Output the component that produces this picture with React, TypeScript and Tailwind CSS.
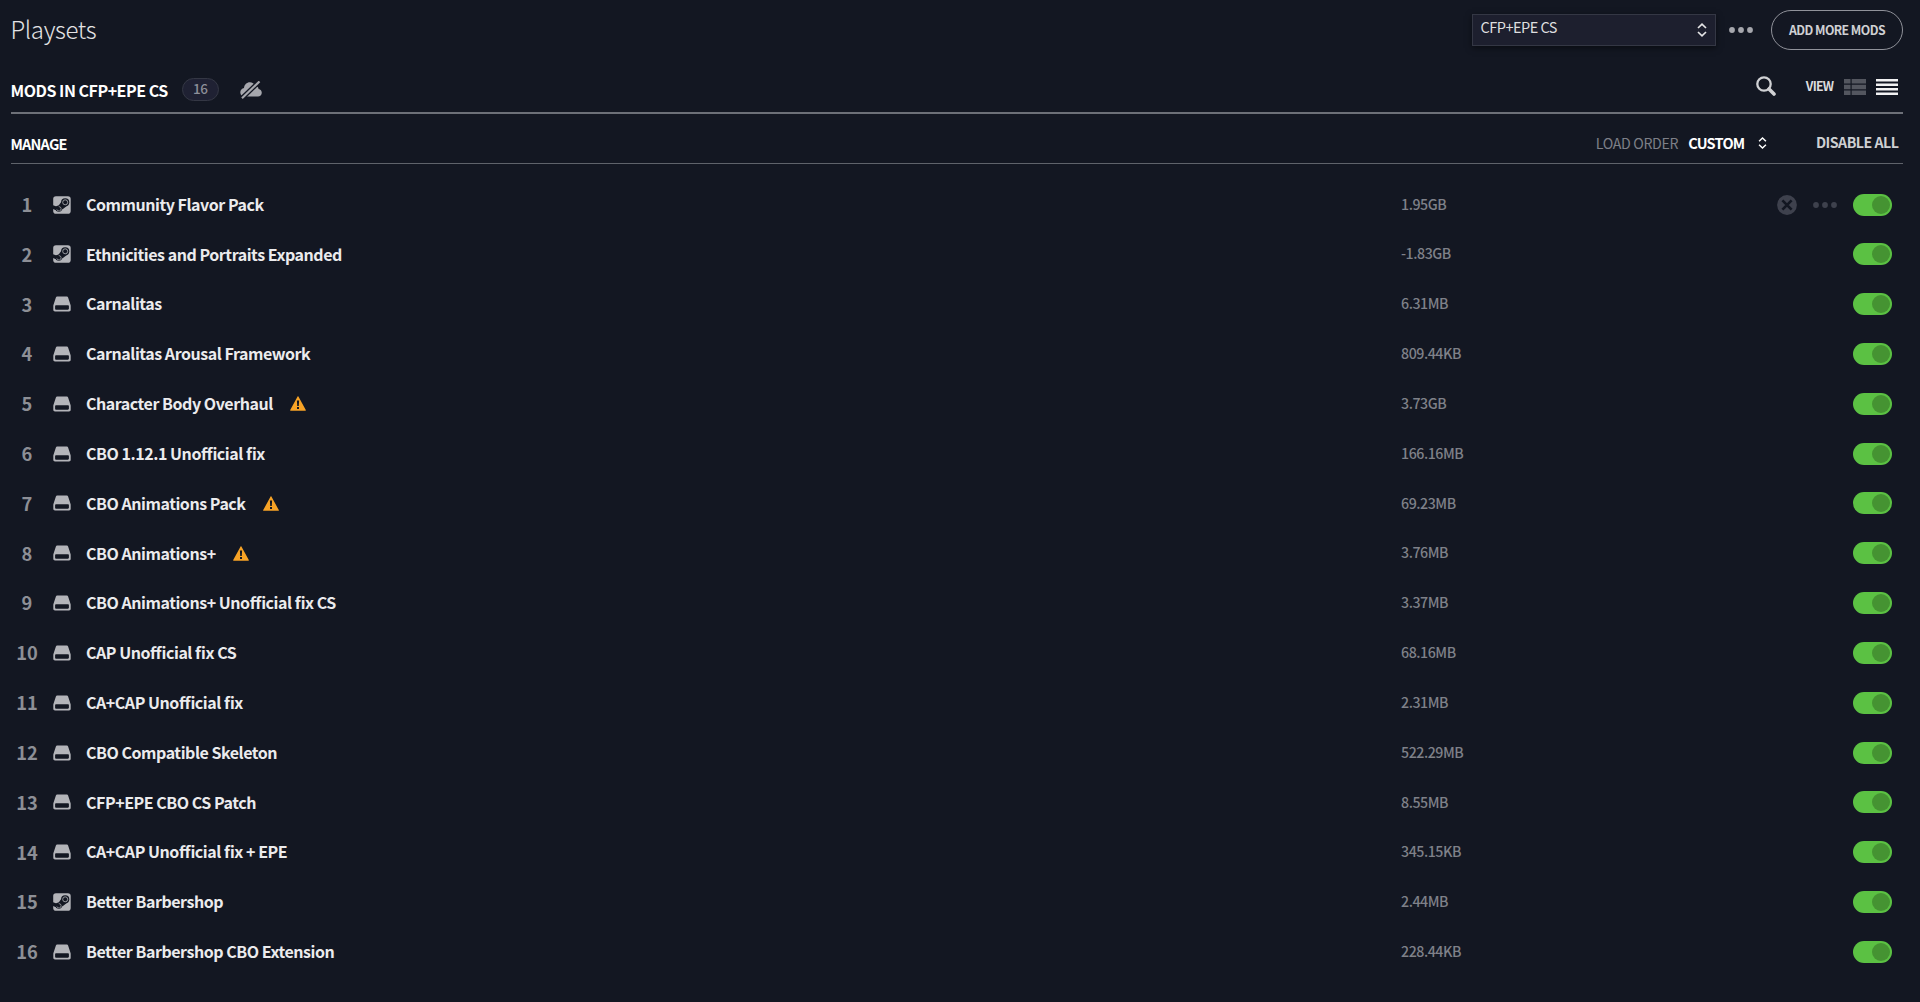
type Source = "steam" | "local";
type Mod = { name: string; size: string; source: Source; warning?: boolean };

const mods: Mod[] = [
  { name: "Community Flavor Pack", size: "1.95GB", source: "steam" },
  { name: "Ethnicities and Portraits Expanded", size: "-1.83GB", source: "steam" },
  { name: "Carnalitas", size: "6.31MB", source: "local" },
  { name: "Carnalitas Arousal Framework", size: "809.44KB", source: "local" },
  { name: "Character Body Overhaul", size: "3.73GB", source: "local", warning: true },
  { name: "CBO 1.12.1 Unofficial fix", size: "166.16MB", source: "local" },
  { name: "CBO Animations Pack", size: "69.23MB", source: "local", warning: true },
  { name: "CBO Animations+", size: "3.76MB", source: "local", warning: true },
  { name: "CBO Animations+ Unofficial fix CS", size: "3.37MB", source: "local" },
  { name: "CAP Unofficial fix CS", size: "68.16MB", source: "local" },
  { name: "CA+CAP Unofficial fix", size: "2.31MB", source: "local" },
  { name: "CBO Compatible Skeleton", size: "522.29MB", source: "local" },
  { name: "CFP+EPE CBO CS Patch", size: "8.55MB", source: "local" },
  { name: "CA+CAP Unofficial fix + EPE", size: "345.15KB", source: "local" },
  { name: "Better Barbershop", size: "2.44MB", source: "steam" },
  { name: "Better Barbershop CBO Extension", size: "228.44KB", source: "local" },
];

function Sorter({ className }: { className: string }) {
  return (
    <svg viewBox="0 0 10 14" className={className} fill="none" stroke="currentColor" strokeWidth="1.7">
      <path d="M1 5 5 1.200 9 5M1 9l4 3.800L9 9" />
    </svg>
  );
}

function Dots({ className }: { className: string }) {
  return (
    <svg viewBox="0 0 24 6" className={className} fill="currentColor">
      <circle cx="3" cy="3" r="2.900" />
      <circle cx="12" cy="3" r="2.900" />
      <circle cx="21" cy="3" r="2.900" />
    </svg>
  );
}

function CloudOff() {
  return (
    <svg viewBox="0 0 22 18" className="mt-[6px] ml-[21px] h-[18px] w-[22px] shrink-0 text-[#a6a7ad]">
      <path
        fill="currentColor"
        d="M4.500 15.500A4.400 4.400 0 0 1 .3 11.200C.3 9 2 7.300 4 6.900 4.400 3.600 6.800 1.300 9.800 1.300c2.400 0 4.400 1.300 5.400 3.400 1.900.3 3.200 1.600 3.400 3.300 2 .4 3.200 1.900 3.200 3.700 0 2.200-1.700 3.800-3.800 3.800Z"
      />
      <path d="M.5 18.700 20.800-.9" stroke="#131722" strokeWidth="4.800" />
      <path d="M2 17.200 19.500.4" stroke="currentColor" strokeWidth="2.100" />
    </svg>
  );
}

function SearchIcon() {
  return (
    <svg viewBox="0 0 20 20" className="mb-[1.5px] h-5 w-5" fill="none" stroke="#d0d1d4">
      <circle cx="8" cy="8" r="6.700" strokeWidth="2.300" />
      <path d="m13 13 5 5" strokeWidth="3.600" strokeLinecap="round" />
    </svg>
  );
}

function SteamIcon() {
  return (
    <svg viewBox="0 0 18 18" className="size-[18px]">
      <rect x=".2" y=".2" width="17.500" height="17.500" rx="2.800" fill="#b3b4b9" />
      <g fill="#131722">
        <path d="M0 9.200 3.600 10.500 5.300 9.900 8.200 6l6.600 3.300-4.200 3.300-1.500.8-3 2.400L3 14.300 0 12.900Z" />
        <circle cx="12.200" cy="6.300" r="4.100" />
        <circle cx="5.800" cy="12.600" r="3.200" />
      </g>
      <circle cx="12.200" cy="6.300" r="2.500" fill="none" stroke="#b3b4b9" strokeWidth=".8" />
      <path d="M3.800 13.400a2.200 2.200 0 1 0 2-2.800" fill="none" stroke="#b3b4b9" strokeWidth=".7" />
    </svg>
  );
}

function DriveIcon() {
  return (
    <svg viewBox="0 0 18 16" className="h-4 w-[18px]">
      <path
        fill="#b3b4b9"
        fillRule="evenodd"
        d="M4.200.5h9.600c.7 0 1.100.3 1.300.9l2.300 7.100c.2.500.3.800.3 1.300v3.900c0 1-.7 1.700-1.700 1.700H2c-1 0-1.700-.7-1.700-1.700V9.800c0-.5.100-.8.3-1.300l2.300-7.100C3.100.8 3.500.5 4.200.5ZM3 9.200a.9.900 0 0 0-.9.900v2.700c0 .5.400.9.900.9h12c.5 0 .9-.4.900-.9v-2.700a.9.900 0 0 0-.9-.9Z"
      />
    </svg>
  );
}

function WarningIcon() {
  return (
    <svg viewBox="0 0 16 15" className="ml-[17px] h-[15px] w-4">
      <path fill="#f7a326" d="M7.600.5c.2-.4.600-.4.800 0l7.400 13.600c.2.400 0 .7-.4.700H.6c-.4 0-.6-.3-.4-.7Z" />
      <path fill="#131722" d="M6.900 4.600h2.200L8.800 10H7.200ZM7 11h2v1.900H7Z" />
    </svg>
  );
}

function RemoveIcon() {
  return (
    <svg viewBox="0 0 20 20" className="h-5 w-5">
      <circle cx="10" cy="10" r="9.900" fill="#3e414d" />
      <path d="m5.400 5.400 9.200 9.200m0-9.200-9.200 9.200" stroke="#131722" strokeWidth="2.700" />
    </svg>
  );
}

function Toggle() {
  return (
    <button className="flex h-[22px] w-[39px] items-center justify-end rounded-full bg-[#5bc143] pr-[2px]">
      <span className="size-[18px] rounded-full bg-[#459332]" />
    </button>
  );
}

function ModRow({ mod, index }: { mod: Mod; index: number }) {
  return (
    <li className="flex h-[49.83px] items-center">
      <span className="w-[33px] pb-[1px] text-center text-[18.3px] font-bold text-[#8d8f96]">{index + 1}</span>
      <span className="ml-[9.5px] flex w-[18px] justify-center">
        {mod.source === "steam" ? <SteamIcon /> : <DriveIcon />}
      </span>
      <span className="ml-[15px] flex w-[1315px] items-center">
        <span className="pb-[1.6px] text-[16px] font-bold tracking-[-0.46px] whitespace-nowrap text-[#ebebed] [font-feature-settings:'liga']">
          {mod.name}
        </span>
        {mod.warning && <WarningIcon />}
      </span>
      <span className="pb-[1.6px] text-[14.2px] font-medium tracking-[-0.45px] text-[#7f8189]">{mod.size}</span>
      <span className="ml-auto flex items-center pr-[11px]">
        {index === 0 && (
          <>
            <RemoveIcon />
            <Dots className="mx-4 h-[6px] w-6 text-[#3e414d]" />
          </>
        )}
        <Toggle />
      </span>
    </li>
  );
}

export default function App() {
  return (
    <main className="h-[1002px] w-[1920px] overflow-hidden bg-[#131722] pr-[17px] pl-[10.5px] font-['Noto_Sans_CJK_SC',sans-serif] leading-none text-white">
      <header className="flex h-[62px] items-start justify-between">
        <h1 className="pt-4 text-[24px] leading-[26px] font-light tracking-[-0.35px] text-[#e3e3e5]">Playsets</h1>
        <div className="flex items-start pt-[10px]">
          <button className="mt-1 flex h-8 w-[244px] items-start justify-between border border-[#343744] bg-[#1d1f2e] pt-1 pr-2 pl-[7.5px] shadow-[0_2px_6px_rgba(0,0,0,0.5)]">
            <span className="text-[14.5px] leading-4 tracking-[-0.5px] text-[#dededf]">CFP+EPE CS</span>
            <Sorter className="mt-1 h-[14px] w-[10px] text-[#e5e5e6]" />
          </button>
          <Dots className="mt-[16.5px] mr-[18.5px] ml-[12.5px] h-[6px] w-6 text-[#a6a7ad]" />
          <button className="flex h-10 w-[132px] items-center justify-center rounded-full border border-[#90929a] text-[12.3px] font-bold tracking-[-0.56px] text-[#cfd0d3]">
            ADD MORE MODS
          </button>
        </div>
      </header>

      <section className="flex h-[52px] items-center justify-between border-b-2 border-[#6d7078]">
        <div className="flex items-center">
          <h2 className="pt-[5px] text-[16px] font-bold tracking-[-0.48px]">MODS IN CFP+EPE CS</h2>
          <span className="mt-[5px] ml-[14px] flex h-[23px] w-[37px] items-center justify-center rounded-full border border-[#343744] bg-[#1f2133] pb-[1px] text-[13.5px] font-medium tracking-[-0.6px] text-[#8d8f99]">
            16
          </span>
          <CloudOff />
        </div>
        <div className="flex items-center pr-[4.7px]">
          <SearchIcon />
          <span className="ml-[30px] pb-[1px] text-[12.3px] font-bold tracking-[-0.75px] text-[#dcdcde]">VIEW</span>
          <svg viewBox="0 0 22 16" className="ml-[11px] h-4 w-[22px]" fill="#53565f">
            <path d="M0 0h6.500v4.400H0zM7.700 0H22v4.400H7.700zM0 5.800h6.500v4.400H0zM7.700 5.800H22v4.400H7.700zM0 11.600h6.500V16H0zM7.700 11.600H22V16H7.700z" />
          </svg>
          <svg viewBox="0 0 22 16" className="ml-[10px] h-4 w-[22px]" fill="#f2f2f3">
            <path d="M0 0h22v2.600H0zM0 4.500h22v2.600H0zM0 8.900h22v2.600H0zM0 13.400h22V16H0z" />
          </svg>
        </div>
      </section>

      <section className="flex h-[50px] items-center justify-between border-b border-[#5f636b]">
        <h3 className="pt-[12px] text-[14.5px] font-bold tracking-[-0.8px]">MANAGE</h3>
        <div className="flex items-center pt-[9px] pr-[4.5px]">
          <span className="text-[14.2px] tracking-[-0.35px] text-[#7d7f87]">LOAD ORDER</span>
          <span className="ml-[10px] text-[14.5px] font-bold tracking-[-0.75px]">CUSTOM</span>
          <Sorter className="ml-[14px] h-3 w-[9px]" />
          <span className="ml-[48.5px] pb-[1.5px] text-[14.2px] font-bold tracking-[-0.5px] text-[#cfd0d3]">DISABLE ALL</span>
        </div>
      </section>

      <ol className="pt-[15.6px]">
        {mods.map((mod, index) => (
          <ModRow key={mod.name} mod={mod} index={index} />
        ))}
      </ol>
    </main>
  );
}
